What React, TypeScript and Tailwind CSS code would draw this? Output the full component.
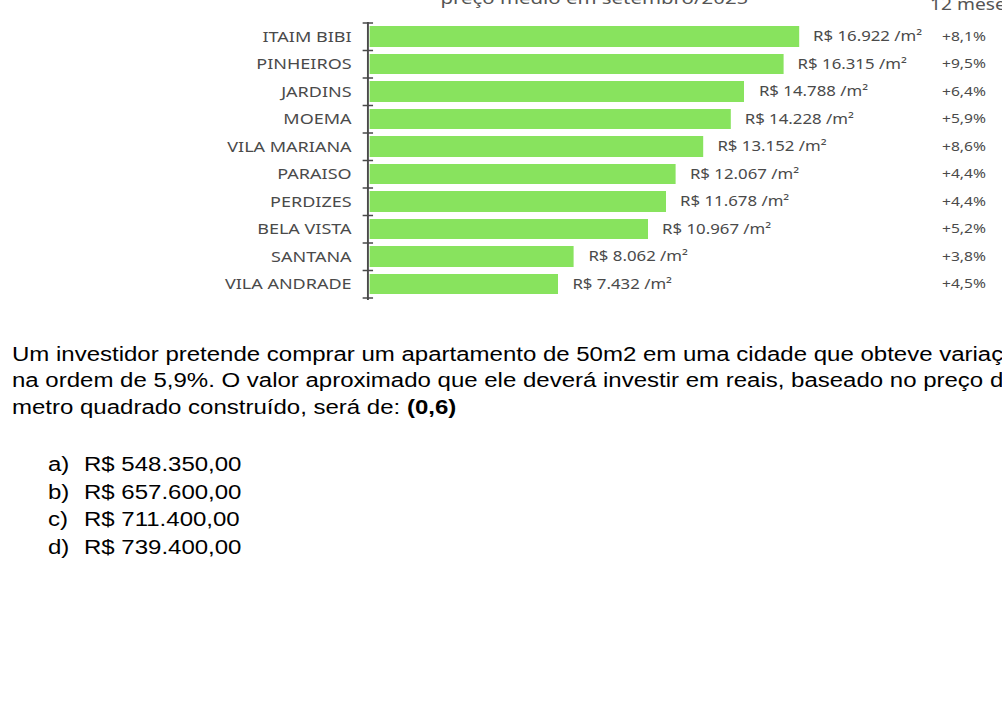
import React from "react";

type Row = { name: string; price: number; label: string; pct: string };

const rows: Row[] = [
  { name: "ITAIM BIBI", price: 16922, label: "R$ 16.922 /m²", pct: "+8,1%" },
  { name: "PINHEIROS", price: 16315, label: "R$ 16.315 /m²", pct: "+9,5%" },
  { name: "JARDINS", price: 14788, label: "R$ 14.788 /m²", pct: "+6,4%" },
  { name: "MOEMA", price: 14228, label: "R$ 14.228 /m²", pct: "+5,9%" },
  { name: "VILA MARIANA", price: 13152, label: "R$ 13.152 /m²", pct: "+8,6%" },
  { name: "PARAISO", price: 12067, label: "R$ 12.067 /m²", pct: "+4,4%" },
  { name: "PERDIZES", price: 11678, label: "R$ 11.678 /m²", pct: "+4,4%" },
  { name: "BELA VISTA", price: 10967, label: "R$ 10.967 /m²", pct: "+5,2%" },
  { name: "SANTANA", price: 8062, label: "R$ 8.062 /m²", pct: "+3,8%" },
  { name: "VILA ANDRADE", price: 7432, label: "R$ 7.432 /m²", pct: "+4,5%" },
];

const PX_PER_REAL = 429 / 16922 / 1.2;

function Axis() {
  const ticks = Array.from({ length: 11 }, (_, i) => 1 + 27.5 * i);
  return (
    <svg width="9" height="279" viewBox="0 0 9 279" className="-mt-[1px] shrink-0">
      <line x1="4.6" y1="0" x2="4.6" y2="278" stroke="#4a4a4a" strokeWidth="1.6" />
      {ticks.map((y) => (
        <line key={y} x1="0" y1={y} x2="9" y2={y} stroke="#4a4a4a" strokeWidth="1.4" />
      ))}
    </svg>
  );
}

export default function App() {
  const chartFont = { fontFamily: '"Noto Sans", "Open Sans", sans-serif' };
  return (
    <div className="w-[1002px] h-[723px] overflow-hidden bg-white">
      <div className="w-[835px] origin-top-left scale-x-[1.2]">
        {/* header */}
        <div className="flex h-[22.5px] items-start text-[#555555]" style={chartFont}>
          <div className="ml-[367px] w-[408px] shrink-0 -mt-[11px] text-[17px] leading-[17px] whitespace-nowrap">
            preço médio em setembro/2025
          </div>
          <div className="shrink-0 -mt-[4.4px] text-[16px] leading-[16px] whitespace-nowrap">12 meses</div>
        </div>

        {/* chart */}
        <div className="flex" style={chartFont}>
          <div className="w-[293px] flex flex-col shrink-0">
            {rows.map((r) => (
              <div
                key={r.name}
                className="h-[27.5px] flex items-center justify-end text-[15px] leading-none text-[#4a4a4a] whitespace-nowrap"
              >
                {r.name}
              </div>
            ))}
          </div>
          <div className="ml-[9px] flex shrink-0">
            <Axis />
          </div>
          <div className="-ml-[3px] w-[477px] flex flex-col shrink-0">
            {rows.map((r) => (
              <div key={r.name} className="h-[27.5px] flex items-center">
                <div
                  className="h-[20.5px] bg-[#88e35e] shrink-0"
                  style={{ width: `${r.price * PX_PER_REAL}px` }}
                />
                <div className="ml-[12px] text-[14px] leading-none text-[#4a4a4a] whitespace-nowrap">
                  {r.label}
                </div>
              </div>
            ))}
          </div>
          <div className="flex flex-col shrink-0">
            {rows.map((r) => (
              <div
                key={r.name}
                className="h-[27.5px] flex items-center text-[13px] leading-none text-[#4a4a4a] whitespace-nowrap"
              >
                {r.pct}
              </div>
            ))}
          </div>
        </div>

        {/* question */}
        <div
          className="mt-[40.2px] ml-[10px] text-[20px] leading-[26.7px] text-black"
          style={{ fontFamily: '"Liberation Sans", Arial, sans-serif' }}
        >
          <div className="whitespace-nowrap">
            Um investidor pretende comprar um apartamento de 50m2 em uma cidade que obteve variação
          </div>
          <div className="whitespace-nowrap">
            na ordem de 5,9%. O valor aproximado que ele deverá investir em reais, baseado no preço do
          </div>
          <div className="whitespace-nowrap">
            metro quadrado construído, será de: <span className="font-bold">(0,6)</span>
          </div>
        </div>

        <div
          className="mt-[30.5px] ml-[40px] text-[20px] leading-[27.5px] text-black"
          style={{ fontFamily: '"Liberation Sans", Arial, sans-serif' }}
        >
          {[
            ["a)", "R$ 548.350,00"],
            ["b)", "R$ 657.600,00"],
            ["c)", "R$ 711.400,00"],
            ["d)", "R$ 739.400,00"],
          ].map(([k, v]) => (
            <div key={k} className="flex whitespace-nowrap">
              <span className="w-[30px] shrink-0">{k}</span>
              <span>{v}</span>
            </div>
          ))}
        </div>
      </div>
    </div>
  );
}
